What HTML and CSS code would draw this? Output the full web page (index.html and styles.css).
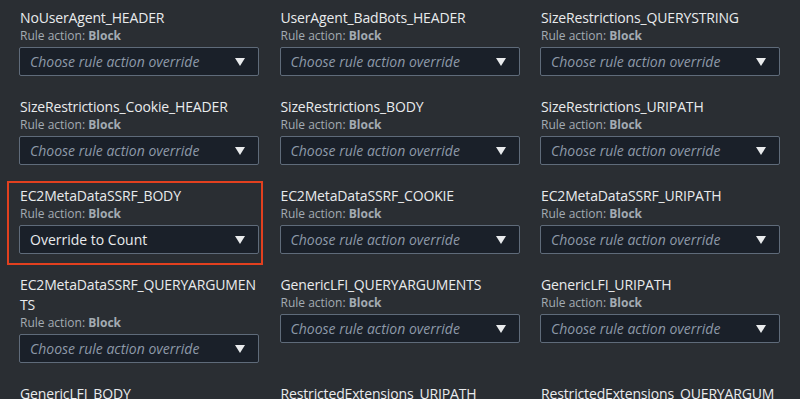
FILE: index.html
```html
<!DOCTYPE html>
<html lang="en">
<head>
    <meta charset="UTF-8">
    <meta name="viewport" content="width=device-width, initial-scale=1.0">
    <title>Rule overrides</title>
    <link rel="stylesheet" href="styles.css">
</head>
<body>
    <div class="rules">
        <div class="rule">
            <div class="rule-name">NoUserAgent_HEADER</div>
            <div class="rule-action">Rule action: <b>Block</b></div>
            <div class="override"><span class="placeholder">Choose rule action override</span><span class="caret"></span></div>
        </div>
        <div class="rule">
            <div class="rule-name">UserAgent_BadBots_HEADER</div>
            <div class="rule-action">Rule action: <b>Block</b></div>
            <div class="override"><span class="placeholder">Choose rule action override</span><span class="caret"></span></div>
        </div>
        <div class="rule">
            <div class="rule-name">SizeRestrictions_QUERYSTRING</div>
            <div class="rule-action">Rule action: <b>Block</b></div>
            <div class="override"><span class="placeholder">Choose rule action override</span><span class="caret"></span></div>
        </div>

        <div class="rule">
            <div class="rule-name">SizeRestrictions_Cookie_HEADER</div>
            <div class="rule-action">Rule action: <b>Block</b></div>
            <div class="override"><span class="placeholder">Choose rule action override</span><span class="caret"></span></div>
        </div>
        <div class="rule">
            <div class="rule-name">SizeRestrictions_BODY</div>
            <div class="rule-action">Rule action: <b>Block</b></div>
            <div class="override"><span class="placeholder">Choose rule action override</span><span class="caret"></span></div>
        </div>
        <div class="rule">
            <div class="rule-name">SizeRestrictions_URIPATH</div>
            <div class="rule-action">Rule action: <b>Block</b></div>
            <div class="override"><span class="placeholder">Choose rule action override</span><span class="caret"></span></div>
        </div>

        <div class="rule rule-highlight">
            <div class="rule-name">EC2MetaDataSSRF_BODY</div>
            <div class="rule-action">Rule action: <b>Block</b></div>
            <div class="override"><span class="value">Override to Count</span><span class="caret"></span></div>
        </div>
        <div class="rule">
            <div class="rule-name">EC2MetaDataSSRF_COOKIE</div>
            <div class="rule-action">Rule action: <b>Block</b></div>
            <div class="override"><span class="placeholder">Choose rule action override</span><span class="caret"></span></div>
        </div>
        <div class="rule">
            <div class="rule-name">EC2MetaDataSSRF_URIPATH</div>
            <div class="rule-action">Rule action: <b>Block</b></div>
            <div class="override"><span class="placeholder">Choose rule action override</span><span class="caret"></span></div>
        </div>

        <div class="rule">
            <div class="rule-name">EC2MetaDataSSRF_QUERYARGUMENTS</div>
            <div class="rule-action">Rule action: <b>Block</b></div>
            <div class="override"><span class="placeholder">Choose rule action override</span><span class="caret"></span></div>
        </div>
        <div class="rule">
            <div class="rule-name">GenericLFI_QUERYARGUMENTS</div>
            <div class="rule-action">Rule action: <b>Block</b></div>
            <div class="override"><span class="placeholder">Choose rule action override</span><span class="caret"></span></div>
        </div>
        <div class="rule">
            <div class="rule-name">GenericLFI_URIPATH</div>
            <div class="rule-action">Rule action: <b>Block</b></div>
            <div class="override"><span class="placeholder">Choose rule action override</span><span class="caret"></span></div>
        </div>

        <div class="rule">
            <div class="rule-name">GenericLFI_BODY</div>
            <div class="rule-action">Rule action: <b>Block</b></div>
            <div class="override"><span class="placeholder">Choose rule action override</span><span class="caret"></span></div>
        </div>
        <div class="rule">
            <div class="rule-name">RestrictedExtensions_URIPATH</div>
            <div class="rule-action">Rule action: <b>Block</b></div>
            <div class="override"><span class="placeholder">Choose rule action override</span><span class="caret"></span></div>
        </div>
        <div class="rule">
            <div class="rule-name">RestrictedExtensions_QUERYARGUMENTS</div>
            <div class="rule-action">Rule action: <b>Block</b></div>
            <div class="override"><span class="placeholder">Choose rule action override</span><span class="caret"></span></div>
        </div>
    </div>
</body>
</html>
```

FILE: styles.css
```css
html, body{
    margin: 0;
    height: 100%;
    overflow: hidden;
}
body{
    background-color: #2a2e33;
    color: #e9ebed;
    font-family: "Open Sans", "Noto Sans", sans-serif;
}
.rules{
    display: grid;
    grid-template-columns: repeat(3, 240px);
    column-gap: 20.5px;
    row-gap: 21px;
    padding: 8px 20px 0 19px;
}
.rule{
    position: relative;
}
.rule-name{
    font-size: 14px;
    line-height: 20px;
    padding-left: 1px;
    letter-spacing: -0.15px;
    word-break: break-all;
}
.rule-action{
    font-size: 12px;
    line-height: 16px;
    padding-left: 1px;
    color: #a3abb2;
}
.rule-action b{
    font-weight: 700;
}
.override{
    margin-top: 3px;
    height: 27px;
    border: 1px solid #5f6b7a;
    border-radius: 2px;
    background-color: #1a2029;
    display: flex;
    align-items: center;
    justify-content: space-between;
    padding: 0 13px 0 10px;
    font-size: 14px;
}
.placeholder{
    font-style: italic;
    color: #8d99a8;
}
.value{
    color: #e9ebed;
}
.caret{
    width: 0;
    height: 0;
    border-left: 5px solid transparent;
    border-right: 5px solid transparent;
    border-top: 8px solid #e9ebed;
}
.rule-highlight::after{
    content: "";
    position: absolute;
    top: -5px;
    left: -12px;
    right: -4px;
    bottom: -11px;
    border: 2.5px solid #e2401f;
}
```
